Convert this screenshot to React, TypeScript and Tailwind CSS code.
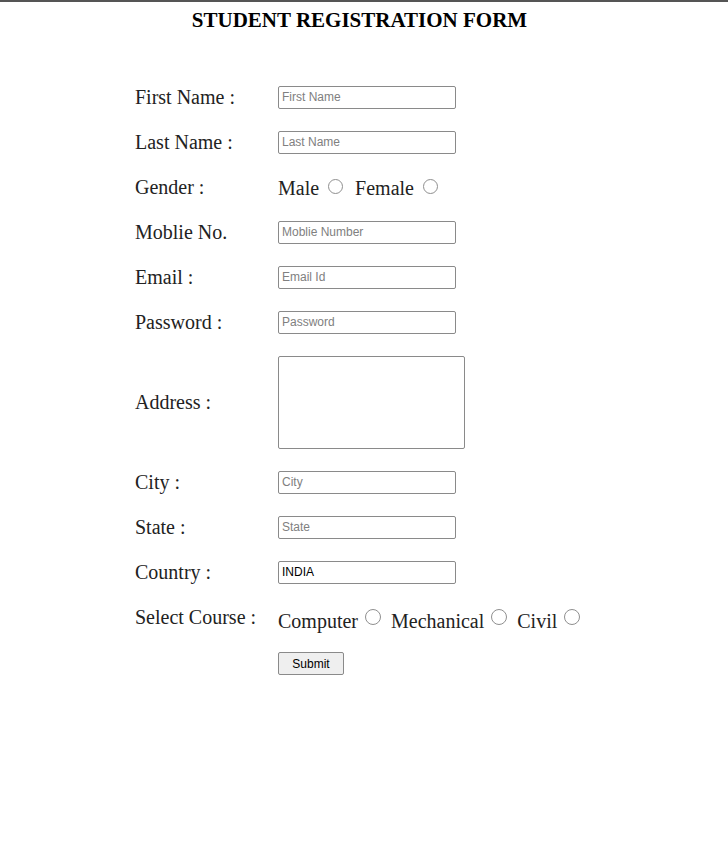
import React from 'react';

const serif = { fontFamily: '"Liberation Serif", "DejaVu Serif", serif' };

const GenderRadio = () => <span className="inline-block w-[15px] h-[15px] rounded-full border border-[#8f8f8f] bg-white ml-[9px] mr-[12px] align-[1px]" />;
const CourseRadio = () => <span className="inline-block w-[16px] h-[16px] rounded-full border border-[#8f8f8f] bg-white ml-[7px] mr-[10px] align-[3px]" />;

const TextBox = ({ placeholder, value }: { placeholder?: string; value?: string }) => <input type="text" placeholder={placeholder} defaultValue={value} className="w-[178px] h-[23px] border border-[#8a8a8a] rounded-[2px] px-[3px] text-[12px] text-black placeholder:text-[#808080] outline-none font-['Liberation_Sans',sans-serif]" />;

const Row = ({ label, children, tall }: { label: string; children: React.ReactNode; tall?: boolean }) => <div className={tall ? 'flex items-center h-[115px]' : 'flex items-center h-[45px]'}>
    <div className="w-[143px] shrink-0">{label}</div>
    <div className="flex items-center">{children}</div>
  </div>;

const App = () => {
  return <div className="min-h-[856px] bg-white border-t-2 border-[#555555] text-[20px] leading-[23px] text-[#222222]" style={serif}>
      <h2 className="text-center font-bold text-[21px] leading-none text-black pt-[8px] pr-[9px]">STUDENT REGISTRATION FORM</h2>
      <form className="pl-[135px] pt-[44px] flex flex-col" onSubmit={e => e.preventDefault()}>
        <Row label="First Name :"><TextBox placeholder="First Name" /></Row>
        <Row label="Last Name :"><TextBox placeholder="Last Name" /></Row>
        <Row label="Gender :">
          <span className="pt-[2px]">Male<GenderRadio />Female<GenderRadio /></span>
        </Row>
        <Row label="Moblie No."><TextBox placeholder="Moblie Number" /></Row>
        <Row label="Email :"><TextBox placeholder="Email Id" /></Row>
        <Row label="Password :"><TextBox placeholder="Password" /></Row>
        <Row label="Address :" tall>
          <textarea className="w-[187px] h-[93px] border border-[#8a8a8a] rounded-[2px] outline-none resize-none" />
        </Row>
        <Row label="City :"><TextBox placeholder="City" /></Row>
        <Row label="State :"><TextBox placeholder="State" /></Row>
        <Row label="Country :"><TextBox value="INDIA" /></Row>
        <Row label="Select Course :">
          <span className="pt-[6px]">Computer<CourseRadio />Mechanical<CourseRadio />Civil<CourseRadio /></span>
        </Row>
        <div className="flex items-center h-[46px] pl-[143px]">
          <button type="submit" className="w-[66px] h-[23px] bg-[#efefef] border border-[#8a8a8a] rounded-[2px] text-[12px] text-black font-['Liberation_Sans',sans-serif]">Submit</button>
        </div>
      </form>
    </div>;
};

export default App;
